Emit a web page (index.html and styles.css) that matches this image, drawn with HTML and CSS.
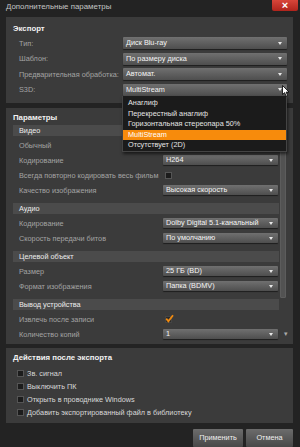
FILE: index.html
```html
<!DOCTYPE html>
<html lang="ru">
<head>
<meta charset="utf-8">
<title>Дополнительные параметры</title>
<link rel="stylesheet" href="styles.css">
</head>
<body>
<div class="window">
  <div class="titlebar">
    <span class="title">Дополнительные параметры</span>
    <div class="close">×</div>
  </div>

  <section class="panel export">
    <h2 class="panel-title">Экспорт</h2>
    <div class="form">
      <div class="row"><span class="label">Тип:</span><div class="select">Диск Blu-ray</div></div>
      <div class="row"><span class="label">Шаблон:</span><div class="select">По размеру диска</div></div>
      <div class="row"><span class="label">Предварительная обработка:</span><div class="select">Автомат.</div></div>
      <div class="row"><span class="label">S3D:</span><div class="select">MultiStream</div></div>
    </div>
    <ul class="dropdown-list">
      <li>Анаглиф</li>
      <li>Перекрестный анаглиф</li>
      <li>Горизонтальная стереопара 50%</li>
      <li class="active">MultiStream</li>
      <li>Отсутствует (2D)</li>
    </ul>
    <svg class="cursor" width="8" height="12" viewBox="0 0 8 12"><path d="M0.5 0.5 L0.5 9.5 L2.6 7.6 L4.2 11.2 L5.6 10.6 L4.1 7.1 L7 7 Z" fill="#fff" stroke="#000" stroke-width="0.8"/></svg>
  </section>

  <section class="panel params">
    <div class="params-content">
      <h2 class="panel-title">Параметры</h2>
      <div class="group">
        <div class="group-head">Видео</div>
        <div class="prow"><span class="label">Обычный</span></div>
        <div class="prow"><span class="label">Кодирование</span><div class="select small">H264</div></div>
        <div class="prow"><span class="label">Всегда повторно кодировать весь фильм</span><span class="check"></span></div>
        <div class="prow"><span class="label">Качество изображения</span><div class="select small">Высокая скорость</div></div>
      </div>
      <div class="group">
        <div class="group-head">Аудио</div>
        <div class="prow"><span class="label">Кодирование</span><div class="select small">Dolby Digital 5.1-канальный</div></div>
        <div class="prow"><span class="label">Скорость передачи битов</span><div class="select small">По умолчанию</div></div>
      </div>
      <div class="group">
        <div class="group-head">Целевой объект</div>
        <div class="prow"><span class="label">Размер</span><div class="select small">25 ГБ (BD)</div></div>
        <div class="prow"><span class="label">Формат изображения</span><div class="select small">Папка (BDMV)</div></div>
      </div>
      <div class="group">
        <div class="group-head">Вывод устройства</div>
        <div class="prow"><span class="label">Извлечь после записи</span><span class="check checked"><svg width="9" height="9" viewBox="0 0 9 9"><path d="M1.2 4.6 L3.4 7.2 L8 1.2" fill="none" stroke="#f08a10" stroke-width="1.8"/></svg></span></div>
        <div class="prow"><span class="label">Количество копий</span><div class="select small">1</div><span class="spin">▾</span></div>
      </div>
    </div>
    <div class="scrollbar"><div class="thumb"></div></div>
  </section>

  <section class="panel actions">
    <h2 class="panel-title">Действия после экспорта</h2>
    <div class="crow"><span class="check"></span><span class="ctext">Зв. сигнал</span></div>
    <div class="crow"><span class="check"></span><span class="ctext">Выключить ПК</span></div>
    <div class="crow"><span class="check"></span><span class="ctext">Открыть в проводнике Windows</span></div>
    <div class="crow"><span class="check"></span><span class="ctext">Добавить экспортированный файл в библиотеку</span></div>
  </section>

  <div class="buttons">
    <div class="btn apply">Применить</div>
    <div class="btn cancel">Отмена</div>
  </div>
</div>
</body>
</html>
```

FILE: styles.css
```css
* { box-sizing: border-box; margin: 0; padding: 0; }
html, body { width: 300px; height: 447px; overflow: hidden; }
body {
  background: #222;
  font-family: "Liberation Sans", Arial, sans-serif;
  font-size: 7.3px;
  color: #a0a0a0;
}
.window {
  width: 300px;
  height: 447px;
  background: #232323;
  padding: 0 7px 0 6px;
  display: flex;
  flex-direction: column;
  position: relative;
  overflow: hidden;
}
.titlebar {
  height: 17px;
  display: flex;
  align-items: flex-start;
  position: relative;
}
.title {
  font-size: 7.9px;
  line-height: 14px;
  color: #c4c4c4;
}
.close {
  position: absolute;
  right: -5px;
  top: 0;
  width: 26px;
  height: 11px;
  background: linear-gradient(#d8463a, #b0241c);
  border-radius: 0 0 2px 2px;
  color: #fff;
  font-size: 11px;
  line-height: 10px;
  text-align: center;
  font-weight: bold;
}
.panel {
  background: #3b3b3b;
  position: relative;
}
.panel-title {
  font-size: 7.8px;
  font-weight: bold;
  color: #f2f2f2;
  line-height: 12px;
  height: 12px;
}
.export {
  height: 86px;
  padding: 6px 6px 7px 7px;
}
.export .panel-title { margin-bottom: 2px; }
.form { display: flex; flex-direction: column; gap: 3.67px; }
.row {
  display: flex;
  align-items: center;
  height: 12px;
  padding-left: 6px;
}
.row .label { width: 104px; }
.label { color: #a3a3a3; white-space: nowrap; }
.select {
  flex: 1;
  height: 12px;
  line-height: 12px;
  padding-left: 3px;
  color: #f4f4f4;
  background: linear-gradient(#707070, #4e4e4e);
  border-radius: 1px;
  box-shadow: 0 1px 1px rgba(0,0,0,0.5);
  position: relative;
  white-space: nowrap;
}
.select::after {
  content: "";
  position: absolute;
  right: 5px;
  top: 4.5px;
  border-left: 2.5px solid transparent;
  border-right: 2.5px solid transparent;
  border-top: 3px solid #e8e8e8;
}
.dropdown-list {
  list-style: none;
  position: absolute;
  left: 116px;
  top: 79px;
  width: 165px;
  padding-top: 2px;
  background: #1b1b1b;
  border: 1px solid #444;
  border-top: none;
  box-shadow: 1px 2px 3px rgba(0,0,0,0.6);
  z-index: 5;
}
.dropdown-list li {
  height: 10.6px;
  line-height: 10.6px;
  padding-left: 5px;
  color: #e4e4e4;
}
.dropdown-list li.active { background: #f78b0c; color: #fff; }
.cursor { position: absolute; left: 276px; top: 68px; z-index: 6; }

.params {
  margin-top: 5px;
  height: 236px;
  display: flex;
  padding: 4px 0 1px 7px;
}
.params-content { width: 266px; }
.params .panel-title { margin-bottom: 0.5px; }
.group { margin-bottom: 5px; }
.group-head {
  height: 11px;
  line-height: 11px;
  background: #4b4b4b;
  color: #ececec;
  padding-left: 6px;
  margin-bottom: 2px;
}
.prow {
  height: 15px;
  display: flex;
  align-items: center;
  padding-left: 6px;
  position: relative;
}
.prow .label { width: 144px; }
.select.small { flex: none; width: 115px; height: 10.5px; line-height: 10.5px; }
.select.small::after { top: 4px; }
.check {
  width: 7px;
  height: 7px;
  background: #1c1c1c;
  border: 1px solid #555;
  display: inline-block;
  position: relative;
  flex: none;
}
.prow .check { margin-left: 2px; }
.check.checked { background: #2a2a2a; border-color: #444; }
.check svg { position: absolute; left: -1px; top: -3px; }
.spin {
  position: absolute;
  right: -9px;
  color: #aaa;
  font-size: 7px;
}
.scrollbar {
  width: 7px;
  margin-left: 1px;
}
.thumb {
  width: 6px;
  height: 189px;
  margin-top: -3px;
  background: #525252;
  border: 1px solid #5c5c5c;
  border-radius: 1px;
}

.actions {
  margin-top: 4px;
  height: 75px;
  padding: 4px 6px 4px 7px;
}
.actions .panel-title { margin-bottom: 3.6px; }
.crow {
  height: 12.7px;
  display: flex;
  align-items: center;
  padding-left: 4px;
  gap: 3px;
}
.ctext { color: #d8d8d8; white-space: nowrap; }
.buttons {
  margin-top: 6px;
  display: flex;
  justify-content: flex-end;
  gap: 3px;
}
.btn {
  height: 18px;
  line-height: 17px;
  text-align: center;
  color: #efefef;
  background: linear-gradient(#6c6c6c, #484848);
  border-radius: 1px;
}
.apply { width: 50px; }
.cancel { width: 47px; }
```
